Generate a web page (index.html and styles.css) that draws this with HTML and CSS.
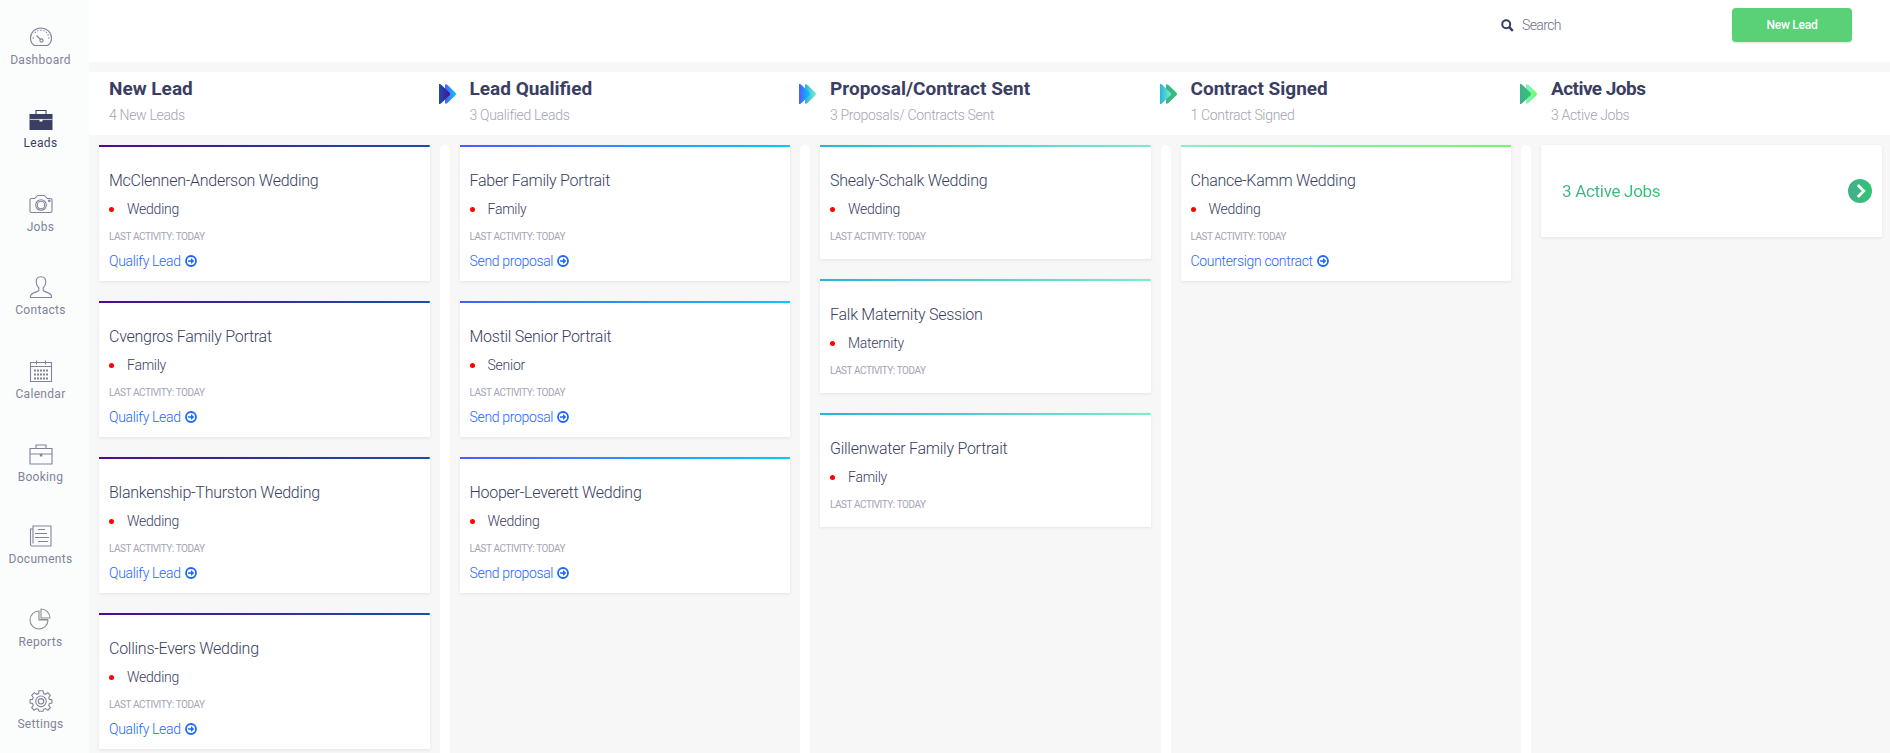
FILE: index.html
```
<!DOCTYPE html>
<html lang="en">
<head>
  <meta charset="utf-8">
  <title>Leads</title>
  <link rel="stylesheet" href="styles.css">
</head>
<body>
  <!-- Shared icons -->
  <svg class="icon-defs" width="0" height="0">
    <defs>
      <linearGradient id="purple"><stop offset="0" stop-color="#1b4fae"/><stop offset="1" stop-color="#4a0d8f"/></linearGradient>
      <linearGradient id="blue"><stop offset="0" stop-color="#4b5bff"/><stop offset="1" stop-color="#08c8fb"/></linearGradient>
      <linearGradient id="teal"><stop offset="0" stop-color="#27b5d6"/><stop offset="1" stop-color="#7aeecb"/></linearGradient>
      <linearGradient id="green"><stop offset="0" stop-color="#43ae8d"/><stop offset="1" stop-color="#2fc573"/></linearGradient>
      <linearGradient id="lime"><stop offset="0" stop-color="#84f0cb"/><stop offset="1" stop-color="#6ffd60"/></linearGradient>
      <symbol id="arrow-circle" viewBox="0 0 12 12">
        <circle cx="6" cy="6" r="5" fill="none" stroke="currentColor" stroke-width="1.8"/>
        <path d="M3 5.2h3V3.100L9.200 6 6 8.900V6.800H3z" fill="currentColor"/>
      </symbol>
    </defs>
  </svg>

  <div class="app">
    <!-- Sidebar -->
    <nav class="sidebar">
      <a class="nav-item">
        <svg width="24" height="22" viewBox="0 0 24 22"><path d="M5.500 19.500C3 18 1.500 15 1.500 12a10.500 10 0 0 1 21 0c0 3-1.500 6-4 7.500z"/><circle cx="12.500" cy="14.500" r="1.600"/><path d="M11.400 13.300L7.500 9.500M12 3.500v1.500M6 6l.8.8M18 6l-.8.8M3.500 12H5M19 12h1.500M8.700 4.300l.4 1M15.300 4.300l-.4 1M19.700 8.500l-1.200.5"/></svg>
        <span>Dashboard</span>
      </a>
      <a class="nav-item active">
        <svg width="24" height="22" viewBox="0 0 24 22"><path d="M7 5V1.500h10V5"/><path d="M.5 5h23v16H.5z" fill="#3a3e62" stroke="none"/><path class="seam" d="M.5 10.500h23"/><path d="M10.500 10.500h3v2h-3z" fill="#fff" stroke="none"/></svg>
        <span>Leads</span>
      </a>
      <a class="nav-item">
        <svg width="24" height="22" viewBox="0 0 24 22"><path d="M2.500 5.500h3.200L8 3q.4-.5 1-.500h6q.6 0 1 .5l2.300 2.500h3.200q1.500 0 1.500 1.500v11q0 1.500-1.500 1.500h-19Q1 19.500 1 18V7q0-1.500 1.500-1.500z"/><circle cx="12" cy="12" r="5.300"/><circle cx="12" cy="12" r="3.700"/><circle cx="20.300" cy="7.800" r=".8"/></svg>
        <span>Jobs</span>
      </a>
      <a class="nav-item">
        <svg width="24" height="22" viewBox="0 0 24 22"><path d="M12 .8c-3.300 0-4.800 2-4.800 5 0 2.500 1 4.700 2.600 6.200v2.500c-1 1.700-8 2-8.300 5.500v1.500h21V20c-.3-3.500-7.300-3.800-8.300-5.500V12c1.600-1.500 2.600-3.700 2.600-6.200 0-3-1.500-5-4.800-5z"/></svg>
        <span>Contacts</span>
      </a>
      <a class="nav-item">
        <svg width="24" height="22" viewBox="0 0 24 22"><path d="M1.500 2.500h21v19h-21zM1.500 6.500h21M7.500.5v4M16.500.5v4"/><path class="dots" d="M5 10.500h14M5 14.500h14M5 18.500h14"/></svg>
        <span>Calendar</span>
      </a>
      <a class="nav-item">
        <svg width="24" height="22" viewBox="0 0 24 22"><path d="M7 5.500V2h10v3.500M1 5.500h22V21H1zM1 11h22"/><path d="M10.800 11h2.500v2.500h-2.500z" fill="#82839a" stroke="none"/></svg>
        <span>Booking</span>
      </a>
      <a class="nav-item">
        <svg width="24" height="22" viewBox="0 0 24 22"><path d="M4 1h18v20H3q-1.500 0-1.500-1.500V4H4zM4 4v14.500M9 4.500h7M6 8.500h12M6 12.500h14M9 16.500h10"/></svg>
        <span>Documents</span>
      </a>
      <a class="nav-item reports">
        <svg width="24" height="22" viewBox="0 0 24 22"><path d="M10 3a9 9 0 1 0 9 9h-9z"/><path d="M12 1v9h9a9 9 0 0 0-9-9zM10.500 11.500h8.500"/></svg>
        <span>Reports</span>
      </a>
      <a class="nav-item">
        <svg width="24" height="22" viewBox="0 0 24 22"><path d="M10 .8l-.5 2.700-1.800.8-2.500-1.700-2.500 2.700L4.300 7.500l-.8 1.900-2.400.400v3.200l2.400.4.8 2-1.600 2.300 2.400 2.500 2.500-1.700 1.900.8.5 2h4l.5-2 1.900-.8 2.500 1.700 2.400-2.500-1.600-2.300.8-2 2.400-.4V9.800l-2.400-.4-.8-1.900 1.600-2.200-2.500-2.700-2.500 1.700-1.800-.8L14 .8z"/><circle cx="12" cy="11.300" r="5.300"/><circle cx="12" cy="11.300" r="2.700"/></svg>
        <span>Settings</span>
      </a>
    </nav>

    <div class="main">
      <!-- Top Bar -->
      <header class="top-bar">
        <label class="search">
          <svg width="13" height="13" viewBox="0 0 13 13"><circle cx="5.200" cy="5.200" r="4" fill="none" stroke="#3a3e62" stroke-width="2"/><path d="M8.200 8.200l3.600 3.600" stroke="#3a3e62" stroke-width="2.400"/></svg>
          <span>Search</span>
        </label>
        <button class="new-lead-button">New Lead</button>
      </header>

      <!-- Stage headings -->
      <div class="stages">
        <div class="stage">
          <div>
            <h2>New Lead</h2>
            <p>4 New Leads</p>
          </div>
          <svg width="18" height="20" viewBox="0 0 18 20"><path d="M6 1q0-1 1-.8L8.500 1l8 7.800q1.300 1.200 0 2.400l-8 7.800-1.500.8q-1 .2-1-.8z" fill="url(#blue)"/><path d="M0 0h1l1.500 1 8 7.800q1.200 1.200 0 2.400L2.500 19l-1.500 1H0z" fill="url(#purple)"/></svg>
        </div>
        <div class="stage">
          <div>
            <h2>Lead Qualified</h2>
            <p>3 Qualified Leads</p>
          </div>
          <svg width="18" height="20" viewBox="0 0 18 20"><path d="M6 1q0-1 1-.8L8.500 1l8 7.800q1.300 1.200 0 2.400l-8 7.800-1.500.8q-1 .2-1-.8z" fill="url(#teal)"/><path d="M0 0h1l1.500 1 8 7.800q1.200 1.200 0 2.400L2.500 19l-1.500 1H0z" fill="url(#blue)"/></svg>
        </div>
        <div class="stage">
          <div>
            <h2>Proposal/Contract Sent</h2>
            <p>3 Proposals/ Contracts Sent</p>
          </div>
          <svg width="18" height="20" viewBox="0 0 18 20"><path d="M6 1q0-1 1-.8L8.500 1l8 7.800q1.300 1.200 0 2.400l-8 7.800-1.500.8q-1 .2-1-.8z" fill="url(#green)"/><path d="M0 0h1l1.500 1 8 7.800q1.200 1.200 0 2.400L2.500 19l-1.500 1H0z" fill="url(#teal)"/></svg>
        </div>
        <div class="stage">
          <div>
            <h2>Contract Signed</h2>
            <p>1 Contract Signed</p>
          </div>
          <svg width="18" height="20" viewBox="0 0 18 20"><path d="M6 1q0-1 1-.8L8.500 1l8 7.800q1.300 1.200 0 2.400l-8 7.800-1.500.8q-1 .2-1-.8z" fill="url(#lime)"/><path d="M0 0h1l1.500 1 8 7.800q1.200 1.200 0 2.400L2.500 19l-1.500 1H0z" fill="url(#green)"/></svg>
        </div>
        <div class="stage">
          <div>
            <h2 class="tight">Active Jobs</h2>
            <p>3 Active Jobs</p>
          </div>
        </div>
      </div>

      <!-- Board -->
      <div class="board">
        <div class="column new">
          <div class="cards">
            <div class="card">
              <h3>McClennen-Anderson Wedding</h3>
              <div class="tag">Wedding</div>
              <div class="activity">Last activity: today</div>
              <a class="action"><span>Qualify Lead</span><svg width="12" height="12"><use href="#arrow-circle"/></svg></a>
            </div>
            <div class="card">
              <h3>Cvengros Family Portrat</h3>
              <div class="tag">Family</div>
              <div class="activity">Last activity: today</div>
              <a class="action"><span>Qualify Lead</span><svg width="12" height="12"><use href="#arrow-circle"/></svg></a>
            </div>
            <div class="card">
              <h3>Blankenship-Thurston Wedding</h3>
              <div class="tag">Wedding</div>
              <div class="activity">Last activity: today</div>
              <a class="action"><span>Qualify Lead</span><svg width="12" height="12"><use href="#arrow-circle"/></svg></a>
            </div>
            <div class="card">
              <h3>Collins-Evers Wedding</h3>
              <div class="tag">Wedding</div>
              <div class="activity">Last activity: today</div>
              <a class="action"><span>Qualify Lead</span><svg width="12" height="12"><use href="#arrow-circle"/></svg></a>
            </div>
          </div>
          <div class="divider"></div>
        </div>

        <div class="column qualified">
          <div class="cards">
            <div class="card">
              <h3>Faber Family Portrait</h3>
              <div class="tag">Family</div>
              <div class="activity">Last activity: today</div>
              <a class="action"><span>Send proposal</span><svg width="12" height="12"><use href="#arrow-circle"/></svg></a>
            </div>
            <div class="card">
              <h3>Mostil Senior Portrait</h3>
              <div class="tag">Senior</div>
              <div class="activity">Last activity: today</div>
              <a class="action"><span>Send proposal</span><svg width="12" height="12"><use href="#arrow-circle"/></svg></a>
            </div>
            <div class="card">
              <h3>Hooper-Leverett Wedding</h3>
              <div class="tag">Wedding</div>
              <div class="activity">Last activity: today</div>
              <a class="action"><span>Send proposal</span><svg width="12" height="12"><use href="#arrow-circle"/></svg></a>
            </div>
          </div>
          <div class="divider"></div>
        </div>

        <div class="column sent">
          <div class="cards">
            <div class="card">
              <h3>Shealy-Schalk Wedding</h3>
              <div class="tag">Wedding</div>
              <div class="activity">Last activity: today</div>
            </div>
            <div class="card">
              <h3>Falk Maternity Session</h3>
              <div class="tag">Maternity</div>
              <div class="activity">Last activity: today</div>
            </div>
            <div class="card">
              <h3>Gillenwater Family Portrait</h3>
              <div class="tag">Family</div>
              <div class="activity">Last activity: today</div>
            </div>
          </div>
          <div class="divider"></div>
        </div>

        <div class="column signed">
          <div class="cards">
            <div class="card">
              <h3>Chance-Kamm Wedding</h3>
              <div class="tag">Wedding</div>
              <div class="activity">Last activity: today</div>
              <a class="action"><span>Countersign contract</span><svg width="12" height="12"><use href="#arrow-circle"/></svg></a>
            </div>
          </div>
          <div class="divider"></div>
        </div>

        <div class="column jobs">
          <a class="jobs-card">
            <span>3 Active Jobs</span>
            <svg width="24" height="24" viewBox="0 0 24 24"><circle cx="12" cy="12" r="12" fill="url(#green)"/><path d="M9.800 6l6 6-6 6" fill="none" stroke="#fff" stroke-width="2.800"/></svg>
          </a>
        </div>
      </div>
    </div>
  </div>
</body>
</html>
```
FILE: styles.css
```
* {
  box-sizing: border-box;
}

body {
  margin: 0;
  background: #f7f7f7;
  color: #3a3e62;
  font-family: Roboto, "Open Sans", sans-serif;
  font-weight: 300;
  overflow: hidden;
}

h2, h3, p {
  margin: 0;
}

.icon-defs {
  display: block;
}

.app {
  display: flex;
  height: 100vh;
  overflow: hidden;
}

/* Sidebar */
.sidebar {
  flex: none;
  width: 89px;
  padding: 26px 8px 0 0;
  background: #fafdfc;
}

.nav-item {
  display: flex;
  flex-direction: column;
  align-items: center;
  gap: 3px;
  height: 83.4px;
  color: #82839a;
  font-size: 12px;
  font-weight: 400;
  line-height: 18px;
  letter-spacing: 0.3px;
}

.nav-item:nth-child(n+6) {
  height: 82.5px;
}

.nav-item svg {
  fill: none;
  stroke: #82839a;
  stroke-width: 1.1;
}

.nav-item .dots {
  stroke-width: 2;
  stroke-dasharray: 2 1;
}

.nav-item.active {
  color: #3a3e62;
}

.nav-item.active svg {
  stroke: #3a3e62;
}

.nav-item.active .seam {
  stroke: #c3c5d3;
}

.nav-item.reports svg {
  stroke: #8c9090;
}

.main {
  flex: 1;
  min-width: 0;
  display: flex;
  flex-direction: column;
}

/* Top Bar */
.top-bar {
  flex: none;
  display: flex;
  justify-content: flex-end;
  align-items: flex-start;
  height: 62px;
  padding: 8px 38px 0 0;
  background: #fff;
}

.search {
  display: flex;
  align-items: center;
  gap: 8px;
  width: 231px;
  height: 34px;
  color: #6c6f88;
  font-size: 14px;
  letter-spacing: -0.6px;
}

.new-lead-button {
  width: 120px;
  height: 34px;
  padding: 0;
  border: none;
  border-radius: 4px;
  background: #5ad077;
  box-shadow: 0 1px 2px rgba(0, 0, 0, 0.12);
  color: #fff;
  font: 500 12px Roboto, sans-serif;
  letter-spacing: -0.25px;
}

/* Stage headings */
.stages {
  flex: none;
  display: grid;
  grid-template-columns: repeat(5, 360.5px);
  height: 63px;
  margin: 10px 0;
  background: #fff;
}

.stage {
  display: flex;
  justify-content: space-between;
  padding: 5px 0 0 20px;
}

/* the arrow straddles the gap to the next stage */
.stage svg {
  margin: 7px -7px 0 0;
}

.stage h2 {
  font-size: 19px;
  font-weight: 700;
  line-height: 24px;
}

.stage h2.tight {
  letter-spacing: -0.55px;
}

.stage p {
  margin-top: 4px;
  color: #a3a5b3;
  font-size: 14px;
  line-height: 20px;
  letter-spacing: -0.32px;
}

/* Board */
.board {
  flex: 1;
  min-height: 0;
  display: grid;
  grid-template-columns: repeat(5, 360.5px);
}

.column {
  display: flex;
  gap: 10px;
  min-height: 0;
  padding-left: 10px;
}

.cards {
  flex: 1;
  display: flex;
  flex-direction: column;
  gap: 20px;
}

.divider {
  width: 10px;
  border-radius: 5px 5px 0 0;
  background: #fff;
}

.card {
  flex: none;
  padding: 24px 10px 9px;
  background: linear-gradient(90deg, var(--from), var(--to)) top / 100% 2px no-repeat #fff;
  box-shadow: 0 1px 3px rgba(58, 62, 98, 0.1);
}

.new {
  --from: #4a0d8f;
  --to: #1b4fae;
}

.qualified {
  --from: #4b5bff;
  --to: #08c8fb;
}

.sent {
  --from: #27b5d6;
  --to: #7aeecb;
}

.signed {
  --from: #84f0cb;
  --to: #6ffd60;
}

.card h3 {
  font-size: 16px;
  font-weight: 300;
  line-height: 24px;
  letter-spacing: -0.26px;
}

.tag {
  display: flex;
  align-items: center;
  gap: 13px;
  margin-top: 6px;
  font-size: 14px;
  line-height: 20px;
  letter-spacing: -0.25px;
}

.tag::before {
  content: '';
  width: 5px;
  height: 5px;
  border-radius: 50%;
  background: #f00;
}

.activity {
  margin: 10px 0 6px;
  color: #a3a5b3;
  font-size: 10px;
  font-weight: 400;
  line-height: 15px;
  letter-spacing: -0.45px;
  text-transform: uppercase;
}

.activity:last-child {
  margin-bottom: 6px;
}

.action {
  display: flex;
  align-items: center;
  gap: 4px;
  color: #1f66ff;
  font-size: 14px;
  line-height: 22px;
  letter-spacing: -0.33px;
}

.jobs {
  padding-right: 10px;
}

.jobs-card {
  flex: 1;
  display: flex;
  justify-content: space-between;
  align-items: center;
  height: 92px;
  padding: 0 10px 0 21px;
  background: #fff;
  box-shadow: 0 1px 3px rgba(58, 62, 98, 0.1);
  font-size: 17px;
  font-weight: 400;
  letter-spacing: -0.3px;
}

.jobs-card span {
  background: linear-gradient(90deg, #43ae8d, #2fc573);
  -webkit-background-clip: text;
  background-clip: text;
  color: transparent;
}
```
